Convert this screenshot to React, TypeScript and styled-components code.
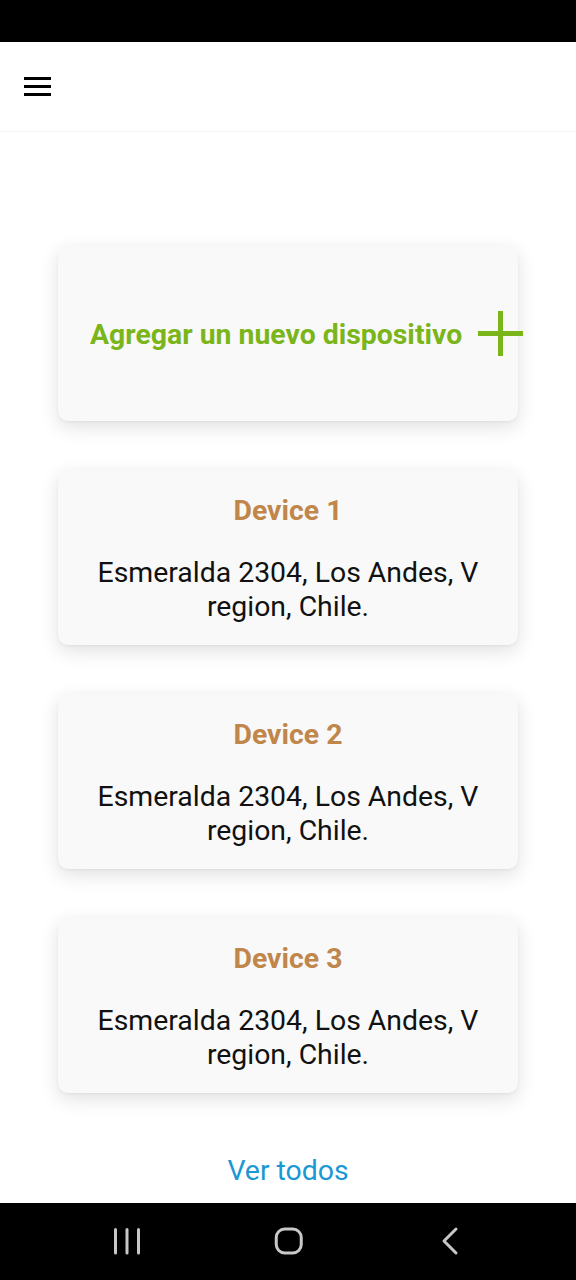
import React from "react";
import styled, { createGlobalStyle } from "styled-components";

const GlobalStyle = createGlobalStyle`
  html, body { margin: 0; padding: 0; background: #ffffff; }
  body { font-family: Roboto, "Liberation Sans", Arial, sans-serif; }
  * { box-sizing: border-box; }
`;

const Page = styled.div`
  width: 576px;
  height: 1280px;
  display: flex;
  flex-direction: column;
  background: #ffffff;
  overflow: hidden;
`;

const StatusBar = styled.div`
  height: 42px;
  flex: none;
  background: #000000;
`;

const Header = styled.header`
  height: 90px;
  flex: none;
  display: flex;
  align-items: center;
  padding-left: 24px;
  background: #ffffff;
  border-bottom: 1px solid #f4f4f4;
`;

const MenuButton = styled.button`
  border: 0;
  background: transparent;
  padding: 0;
  width: 27px;
  height: 20px;
  display: flex;
  margin-top: 0;
`;

const Main = styled.main`
  flex: 1;
  display: flex;
  flex-direction: column;
  align-items: center;
  padding-top: 114px;
  gap: 49px;
`;

const Card = styled.div<{ $add?: boolean }>`
  width: 460px;
  height: 175px;
  flex: none;
  background: #f9f9f9;
  border-radius: 10px;
  box-shadow: 0 6px 20px rgba(0, 0, 0, 0.12), 0 1px 3px rgba(0, 0, 0, 0.05);
  display: flex;
  flex-direction: ${(p) => (p.$add ? "row" : "column")};
  align-items: center;
  justify-content: flex-start;
  padding: ${(p) => (p.$add ? "2px 0 0 32px" : "24px 20px 0")};
`;

const AddLabel = styled.span`
  font-size: 28.4px;
  font-weight: 700;
  color: #7ab51a;
  white-space: nowrap;
  line-height: 34px;
`;

const PlusIcon = styled.svg`
  flex: none;
  width: 45px;
  height: 45px;
  margin-left: 16px;
  margin-top: -2px;
`;

const DeviceTitle = styled.div`
  font-size: 28.4px;
  font-weight: 700;
  color: #c0864a;
  line-height: 34px;
  text-align: center;
`;

const Address = styled.div`
  margin-top: 28px;
  font-size: 28.4px;
  font-weight: 400;
  color: #111111;
  line-height: 34px;
  text-align: center;
`;

const SeeAll = styled.a`
  margin-top: 12px;
  font-size: 28.4px;
  line-height: 34px;
  color: #1a98d5;
  text-decoration: none;
`;

const NavBar = styled.nav`
  height: 77px;
  flex: none;
  background: #000000;
  display: flex;
  align-items: center;
  justify-content: space-between;
  padding: 0 106px 0 107px;
`;

const NavIcon = styled.svg`
  width: 40px;
  height: 40px;
  display: block;
`;

const devices = [
  { name: "Device 1", address: "Esmeralda 2304, Los Andes, V region, Chile." },
  { name: "Device 2", address: "Esmeralda 2304, Los Andes, V region, Chile." },
  { name: "Device 3", address: "Esmeralda 2304, Los Andes, V region, Chile." },
];

export default function App() {
  return (
    <Page>
      <GlobalStyle />
      <StatusBar />
      <Header>
        <MenuButton aria-label="menu">
          <svg width="27" height="20" viewBox="0 0 27 20">
            <rect x="0" y="0" width="27" height="3" fill="#000" />
            <rect x="0" y="8" width="27" height="3" fill="#000" />
            <rect x="0" y="16" width="27" height="3" fill="#000" />
          </svg>
        </MenuButton>
      </Header>
      <Main>
        <Card $add>
          <AddLabel>Agregar un nuevo dispositivo</AddLabel>
          <PlusIcon viewBox="0 0 45 45">
            <rect x="20" y="0" width="5" height="45" fill="#7ab51a" />
            <rect x="0" y="20" width="45" height="5" fill="#7ab51a" />
          </PlusIcon>
        </Card>
        {devices.map((d) => (
          <Card key={d.name}>
            <DeviceTitle>{d.name}</DeviceTitle>
            <Address>{d.address}</Address>
          </Card>
        ))}
        <SeeAll href="#">Ver todos</SeeAll>
      </Main>
      <NavBar>
        <NavIcon viewBox="0 0 40 40">
          <g stroke="#c8c8c8" strokeWidth="3" strokeLinecap="round">
            <line x1="8.5" y1="7.5" x2="8.5" y2="31" />
            <line x1="20" y1="7.5" x2="20" y2="31" />
            <line x1="31.5" y1="7.5" x2="31.5" y2="31" />
          </g>
        </NavIcon>
        <NavIcon viewBox="0 0 40 40">
          <rect x="7.25" y="7" width="25" height="24" rx="8.5" fill="none" stroke="#c8c8c8" strokeWidth="3" />
        </NavIcon>
        <NavIcon viewBox="0 0 40 40">
          <polyline points="26,7 14,19 26,31" fill="none" stroke="#c8c8c8" strokeWidth="3" strokeLinecap="round" strokeLinejoin="round" />
        </NavIcon>
      </NavBar>
    </Page>
  );
}
